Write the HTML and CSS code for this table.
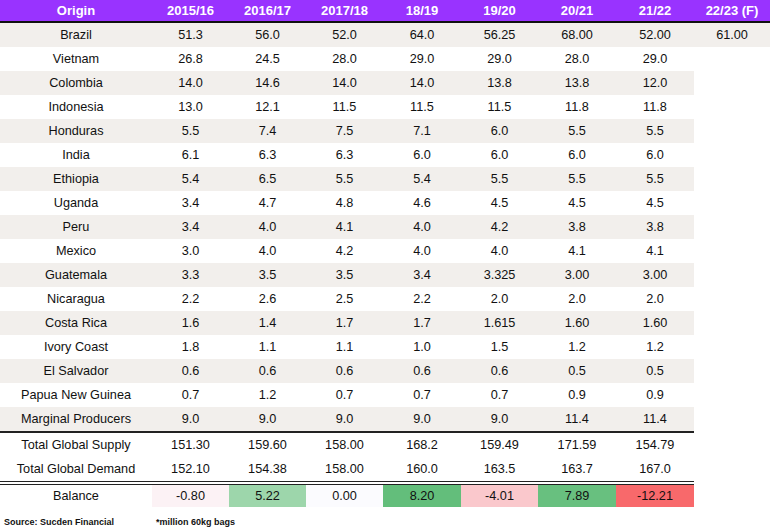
FILE: index.html
```html
<!DOCTYPE html>
<html>
<head>
<meta charset="utf-8">
<link rel="stylesheet" href="styles.css">
</head>
<body>
<div class="tbl">
  <div class="row head">
    <div class="c">Origin</div><div class="c">2015/16</div><div class="c">2016/17</div><div class="c">2017/18</div><div class="c">18/19</div><div class="c">19/20</div><div class="c">20/21</div><div class="c">21/22</div><div class="c">22/23 (F)</div>
  </div>
  <div class="row s full">
    <div class="c">Brazil</div><div class="c">51.3</div><div class="c">56.0</div><div class="c">52.0</div><div class="c">64.0</div><div class="c">56.25</div><div class="c">68.00</div><div class="c">52.00</div><div class="c">61.00</div>
  </div>
  <div class="row">
    <div class="c">Vietnam</div><div class="c">26.8</div><div class="c">24.5</div><div class="c">28.0</div><div class="c">29.0</div><div class="c">29.0</div><div class="c">28.0</div><div class="c">29.0</div><div class="c x"></div>
  </div>
  <div class="row s">
    <div class="c">Colombia</div><div class="c">14.0</div><div class="c">14.6</div><div class="c">14.0</div><div class="c">14.0</div><div class="c">13.8</div><div class="c">13.8</div><div class="c">12.0</div><div class="c x"></div>
  </div>
  <div class="row">
    <div class="c">Indonesia</div><div class="c">13.0</div><div class="c">12.1</div><div class="c">11.5</div><div class="c">11.5</div><div class="c">11.5</div><div class="c">11.8</div><div class="c">11.8</div><div class="c x"></div>
  </div>
  <div class="row s">
    <div class="c">Honduras</div><div class="c">5.5</div><div class="c">7.4</div><div class="c">7.5</div><div class="c">7.1</div><div class="c">6.0</div><div class="c">5.5</div><div class="c">5.5</div><div class="c x"></div>
  </div>
  <div class="row">
    <div class="c">India</div><div class="c">6.1</div><div class="c">6.3</div><div class="c">6.3</div><div class="c">6.0</div><div class="c">6.0</div><div class="c">6.0</div><div class="c">6.0</div><div class="c x"></div>
  </div>
  <div class="row s">
    <div class="c">Ethiopia</div><div class="c">5.4</div><div class="c">6.5</div><div class="c">5.5</div><div class="c">5.4</div><div class="c">5.5</div><div class="c">5.5</div><div class="c">5.5</div><div class="c x"></div>
  </div>
  <div class="row">
    <div class="c">Uganda</div><div class="c">3.4</div><div class="c">4.7</div><div class="c">4.8</div><div class="c">4.6</div><div class="c">4.5</div><div class="c">4.5</div><div class="c">4.5</div><div class="c x"></div>
  </div>
  <div class="row s">
    <div class="c">Peru</div><div class="c">3.4</div><div class="c">4.0</div><div class="c">4.1</div><div class="c">4.0</div><div class="c">4.2</div><div class="c">3.8</div><div class="c">3.8</div><div class="c x"></div>
  </div>
  <div class="row">
    <div class="c">Mexico</div><div class="c">3.0</div><div class="c">4.0</div><div class="c">4.2</div><div class="c">4.0</div><div class="c">4.0</div><div class="c">4.1</div><div class="c">4.1</div><div class="c x"></div>
  </div>
  <div class="row s">
    <div class="c">Guatemala</div><div class="c">3.3</div><div class="c">3.5</div><div class="c">3.5</div><div class="c">3.4</div><div class="c">3.325</div><div class="c">3.00</div><div class="c">3.00</div><div class="c x"></div>
  </div>
  <div class="row">
    <div class="c">Nicaragua</div><div class="c">2.2</div><div class="c">2.6</div><div class="c">2.5</div><div class="c">2.2</div><div class="c">2.0</div><div class="c">2.0</div><div class="c">2.0</div><div class="c x"></div>
  </div>
  <div class="row s">
    <div class="c">Costa Rica</div><div class="c">1.6</div><div class="c">1.4</div><div class="c">1.7</div><div class="c">1.7</div><div class="c">1.615</div><div class="c">1.60</div><div class="c">1.60</div><div class="c x"></div>
  </div>
  <div class="row">
    <div class="c">Ivory Coast</div><div class="c">1.8</div><div class="c">1.1</div><div class="c">1.1</div><div class="c">1.0</div><div class="c">1.5</div><div class="c">1.2</div><div class="c">1.2</div><div class="c x"></div>
  </div>
  <div class="row s">
    <div class="c">El Salvador</div><div class="c">0.6</div><div class="c">0.6</div><div class="c">0.6</div><div class="c">0.6</div><div class="c">0.6</div><div class="c">0.5</div><div class="c">0.5</div><div class="c x"></div>
  </div>
  <div class="row">
    <div class="c">Papua New Guinea</div><div class="c">0.7</div><div class="c">1.2</div><div class="c">0.7</div><div class="c">0.7</div><div class="c">0.7</div><div class="c">0.9</div><div class="c">0.9</div><div class="c x"></div>
  </div>
  <div class="row s sep">
    <div class="c">Marginal Producers</div><div class="c">9.0</div><div class="c">9.0</div><div class="c">9.0</div><div class="c">9.0</div><div class="c">9.0</div><div class="c">11.4</div><div class="c">11.4</div><div class="c x"></div>
  </div>
  <div class="row">
    <div class="c">Total Global Supply</div><div class="c">151.30</div><div class="c">159.60</div><div class="c">158.00</div><div class="c">168.2</div><div class="c">159.49</div><div class="c">171.59</div><div class="c">154.79</div><div class="c x"></div>
  </div>
  <div class="row dbl">
    <div class="c">Total Global Demand</div><div class="c">152.10</div><div class="c">154.38</div><div class="c">158.00</div><div class="c">160.0</div><div class="c">163.5</div><div class="c">163.7</div><div class="c">167.0</div><div class="c x"></div>
  </div>
  <div class="row bal">
    <div class="c">Balance</div>
    <div class="c b1">-0.80</div>
    <div class="c b2">5.22</div>
    <div class="c b3">0.00</div>
    <div class="c b4">8.20</div>
    <div class="c b5">-4.01</div>
    <div class="c b6">7.89</div>
    <div class="c b7">-12.21</div>
    <div class="c x"></div>
  </div>
</div>
<div class="foot">
  <span>Source: Sucden Financial</span>
  <span>*million 60kg bags</span>
</div>
</body>
</html>
```

FILE: styles.css
```css
html, body {
  margin: 0;
  padding: 0;
  background: #ffffff;
}
body {
  width: 770px;
  height: 530px;
  overflow: hidden;
  font-family: "Liberation Sans", Arial, sans-serif;
  color: #111;
}
.tbl {
  width: 770px;
}
.row {
  display: grid;
  grid-template-columns: 152px 77px 77px 77px 78px 77px 78px 78px 76px;
  height: 24px;
  font-size: 12.7px;
}
.c {
  display: flex;
  align-items: center;
  justify-content: center;
  box-sizing: border-box;
  white-space: nowrap;
}
.head {
  height: 23px;
  background: #9933ff;
  border-bottom: 2px solid #111;
  box-sizing: border-box;
  color: #ffffff;
  font-weight: bold;
  font-size: 13px;
}
.s .c {
  background: #f2efec;
}
.s .c.x {
  background: transparent;
}
.full .c.x,
.full .c {
  background: #f2efec;
}
.sep {
  height: 26px;
}
.sep .c {
  border-bottom: 2px solid #222;
}
.dbl {
  height: 28px;
}
.dbl .c {
  border-bottom: 4px double #222;
}
.sep .c.x,
.dbl .c.x {
  border-bottom: none;
}
.bal {
  height: 22px;
}
.b1 { background: #fcf2f5; }
.b2 { background: #9dd6ab; }
.b3 { background: #fbfbfe; }
.b4 { background: #63be7b; }
.b5 { background: #fac8cc; }
.b6 { background: #68c07f; }
.b7 { background: #f8696b; }
.foot {
  display: grid;
  grid-template-columns: 152px auto;
  padding: 9px 0 0 4px;
  font-size: 9px;
  font-weight: bold;
  line-height: 12px;
  color: #111;
}
```
